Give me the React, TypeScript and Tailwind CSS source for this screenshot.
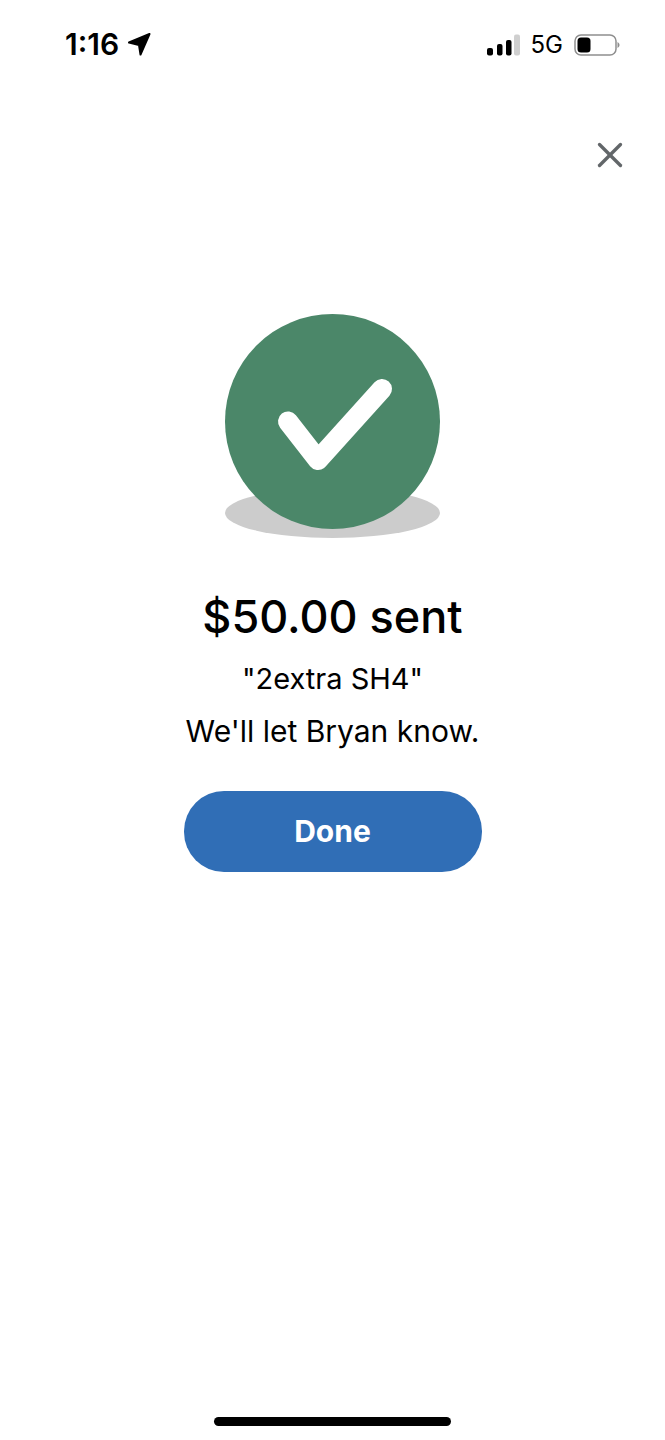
import { X } from 'lucide-react'

function SignalBars() {
  return (
    <svg width="33" height="22" viewBox="0 0 33 22">
      <rect x="0" y="14" width="6" height="7.5" rx="2" fill="#000" />
      <rect x="10" y="10" width="5.5" height="11.5" rx="2" fill="#000" />
      <rect x="19" y="6" width="5.5" height="15.5" rx="2" fill="#000" />
      <rect x="27" y="0.5" width="6" height="21" rx="2" fill="#cfcfcf" />
    </svg>
  )
}

function Battery() {
  return (
    <svg width="46" height="22" viewBox="0 0 46 22">
      <rect x="1" y="1" width="41" height="20" rx="6" fill="none" stroke="#8e8e8e" strokeWidth="1.5" />
      <rect x="3.5" y="3.5" width="13" height="15" rx="3.5" fill="#000" />
      <path d="M43.5 8 C45 9 45.5 10 45.5 11 C45.5 12 45 13 43.5 14 Z" fill="#8e8e8e" />
    </svg>
  )
}

function SuccessBadge() {
  return (
    <svg width="215" height="224" viewBox="0 0 215 224" className="block">
      <ellipse cx="107.5" cy="199" rx="107.5" ry="25" fill="#cccccc" />
      <circle cx="107.5" cy="107.5" r="107.5" fill="#4b8769" />
      <path
        d="M63 107.5 L93 146 L157 75"
        fill="none"
        stroke="#fff"
        strokeWidth="20"
        strokeLinecap="round"
        strokeLinejoin="round"
      />
    </svg>
  )
}

export default function App() {
  return (
    <div className="flex h-[1440px] w-[665px] flex-col overflow-hidden bg-white font-['Inter',sans-serif] text-black">
      {/* status bar */}
      <div className="flex h-[88px] items-start justify-between pl-[65px] pr-[45px] pt-[28px]">
        <div className="flex items-center gap-[8px]">
          <span className="text-[30px] font-semibold leading-[32px]">1:16</span>
          <svg width="24" height="24" viewBox="0 0 24 24">
            <path d="M22.5 2 L2 10.5 L12 13 L13.5 22.5 Z" fill="#000" stroke="#000" strokeWidth="2" strokeLinejoin="round" />
          </svg>
        </div>
        <div className="flex items-center gap-[11px] pt-[4px]">
          <SignalBars />
          <span className="text-[24px] leading-[26px]">5G</span>
          <Battery />
        </div>
      </div>

      <div className="flex justify-end pr-[34px] pt-[46px]">
        <X size={42} strokeWidth={1.9} className="text-[#626669]" />
      </div>

      <div className="flex flex-col items-center pt-[138px]">
        <SuccessBadge />
        <h1 className="mt-[52px] text-[45px] font-medium leading-[54px]">$50.00 sent</h1>
        <p className="mt-[17px] text-[29px] leading-[36px]">"2extra SH4"</p>
        <p className="mt-[16px] text-[30px] leading-[36px]">We'll let Bryan know.</p>
        <button className="mt-[42px] h-[81px] w-[298px] rounded-[40px] bg-[#306eb6] text-[30px] font-bold text-white">
          Done
        </button>
      </div>

      {/* home indicator */}
      <div className="mt-auto flex justify-center pb-[14px]">
        <div className="h-[9px] w-[237px] rounded-full bg-black" />
      </div>
    </div>
  )
}
